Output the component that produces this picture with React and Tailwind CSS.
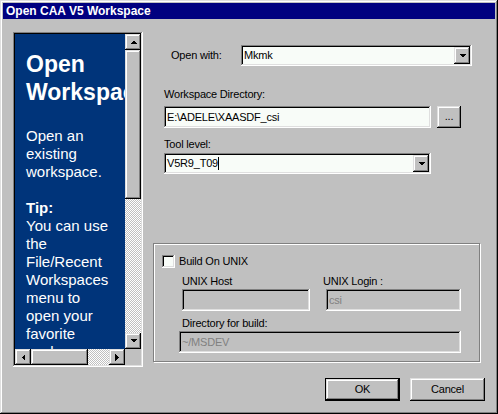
import React from "react";

const raised =
  "bg-[#c0c0c0] shadow-[inset_-1px_-1px_#000,inset_1px_1px_#dfdfdf,inset_-2px_-2px_#808080,inset_2px_2px_#fff]";
const sunken =
  "shadow-[inset_-1px_-1px_#fff,inset_1px_1px_#808080,inset_-2px_-2px_#dfdfdf,inset_2px_2px_#000]";

function Tri({ dir, color = "#000" }) {
  const pts = {
    up: "0,4 7,4 3.5,0.5",
    down: "0,0 7,0 3.5,3.5",
    left: "4,0 4,7 0.5,3.5",
    right: "0,0 0,7 3.5,3.5",
  }[dir];
  const w = dir === "up" || dir === "down" ? 7 : 4;
  const h = dir === "up" || dir === "down" ? 4 : 7;
  return (
    <svg width={w} height={h} viewBox={`0 0 ${w} ${h}`} shapeRendering="crispEdges">
      <polygon points={pts} fill={color} />
    </svg>
  );
}

function ScrollBtn({ dir, className = "" }) {
  return (
    <div className={`${raised} flex items-center justify-center ${className}`}>
      <Tri dir={dir} />
    </div>
  );
}

function Combo({ value, className = "", caret = false }) {
  return (
    <div className={`${sunken} bg-[#f8fcf8] h-[21px] flex items-center pl-[3px] pr-[2px] ${className}`}>
      <span className="flex-1 flex items-center whitespace-nowrap">
        {value}
        {caret && <span className="inline-block w-[1px] h-[13px] bg-black" />}
      </span>
      <div className={`${raised} w-[16px] h-[17px] flex items-center justify-center`}>
        <Tri dir="down" />
      </div>
    </div>
  );
}

const track =
  "bg-[image:repeating-conic-gradient(#c0c0c0_0%_25%,#ffffff_0%_50%)] bg-[length:2px_2px]";

export default function App() {
  return (
    <div className="w-[498px] h-[414px] bg-[#c0c0c0] p-[3px] flex flex-col shadow-[inset_-1px_-1px_#000,inset_1px_1px_#dfdfdf,inset_-2px_-2px_#808080,inset_2px_2px_#fff] font-['Liberation_Sans',Arial,sans-serif] text-black overflow-hidden">
      {/* Title bar */}
      <div className="h-[16px] bg-[#000080] flex items-center pl-[3px] text-white text-[12px] font-bold leading-[16px] whitespace-nowrap">
        Open CAA V5 Workspace
      </div>

      {/* Body */}
      <div className="mt-[1px] flex flex-1">
        {/* Left help panel */}
        <div className={`ml-[10px] mt-[12px] w-[130px] h-[335px] p-[2px] ${sunken}`}>
          <div className="grid grid-cols-[110px_16px] grid-rows-[315px_16px]">
            <div className="overflow-hidden bg-[#00347a] text-white pl-[11px] pt-[16px]">
              <div className="w-[88px]">
                <div className="text-[23px] font-bold leading-[28px] whitespace-nowrap">
                  Open
                  <br />
                  Workspace
                </div>
                <p className="mt-[21px] text-[15px] leading-[18px]">Open an existing workspace.</p>
                <p className="mt-[18px] text-[15px] leading-[18px]">
                  <b>Tip:</b>
                  <br />
                  You can use the File/Recent Workspaces menu to open your favorite workspaces.
                </p>
              </div>
            </div>
            <div className="flex flex-col">
              <ScrollBtn dir="up" className="h-[16px] shrink-0" />
              <div className={`${raised} h-[149px] shrink-0`} />
              <div className={`${track} flex-1`} />
              <ScrollBtn dir="down" className="h-[16px] shrink-0" />
            </div>
            <div className="flex">
              <ScrollBtn dir="left" className="w-[16px] shrink-0" />
              <div className={`${raised} w-[57px] shrink-0`} />
              <div className={`${track} flex-1`} />
              <ScrollBtn dir="right" className="w-[16px] shrink-0" />
            </div>
            <div className="bg-[#c0c0c0]" />
          </div>
        </div>

        {/* Right form */}
        <div className="ml-[10px] w-[342px] flex flex-col text-[11px] leading-[13px] tracking-[-0.2px]">
          <div className="mt-[25px] flex items-center">
            <span className="ml-[18px] w-[70px]">Open with:</span>
            <Combo value="Mkmk" className="w-[231px]" />
          </div>

          <div className="mt-[22px] ml-[11px]">Workspace Directory:</div>
          <div className="mt-[5px] ml-[11px] flex">
            <div className={`${sunken} bg-[#f8fcf8] w-[267px] h-[22px] flex items-center pl-[3px]`}>
              {"E:\\ADELE\\XAASDF_csi"}
            </div>
            <div className={`${raised} ml-[6px] w-[24px] h-[22px] flex items-center justify-center pb-[2px]`}>
              ...
            </div>
          </div>

          <div className="mt-[10px] ml-[11px]">Tool level:</div>
          <Combo value="V5R9_T09" caret className="mt-[2px] ml-[11px] w-[267px]" />

          {/* Group box */}
          <div className="mt-[69px] w-[327px] h-[119px] border border-[#808080] shadow-[inset_1px_1px_#fff,1px_1px_#fff] pl-[8px] pt-[11px]">
            <div className="flex items-center">
              <div className={`${sunken} bg-[#f8fcf8] w-[13px] h-[13px]`} />
              <span className="ml-[4px]">Build On UNIX</span>
            </div>
            <div className="mt-[7px] ml-[20px] flex">
              <div className="w-[141px]">
                <div>UNIX Host</div>
                <div className={`${sunken} mt-[1px] w-[128px] h-[22px]`} />
              </div>
              <div>
                <div>UNIX Login :</div>
                <div className={`${sunken} mt-[1px] ml-[3px] w-[135px] h-[22px] flex items-center pl-[3px] text-[#808080]`}>
                  csi
                </div>
              </div>
            </div>
            <div className="mt-[6px] ml-[20px]">Directory for build:</div>
            <div className={`${sunken} mt-[1px] ml-[17px] w-[282px] h-[22px] flex items-center pl-[3px] text-[#808080]`}>
              ~/MSDEV
            </div>
          </div>

          {/* Buttons */}
          <div className="mt-[16px] pr-[10px] flex justify-end gap-[10px]">
            <div className="w-[75px] h-[23px] border border-black">
              <div className={`${raised} w-full h-full flex items-center justify-center`}>OK</div>
            </div>
            <div className={`${raised} w-[75px] h-[23px] flex items-center justify-center`}>Cancel</div>
          </div>
        </div>
      </div>
    </div>
  );
}
